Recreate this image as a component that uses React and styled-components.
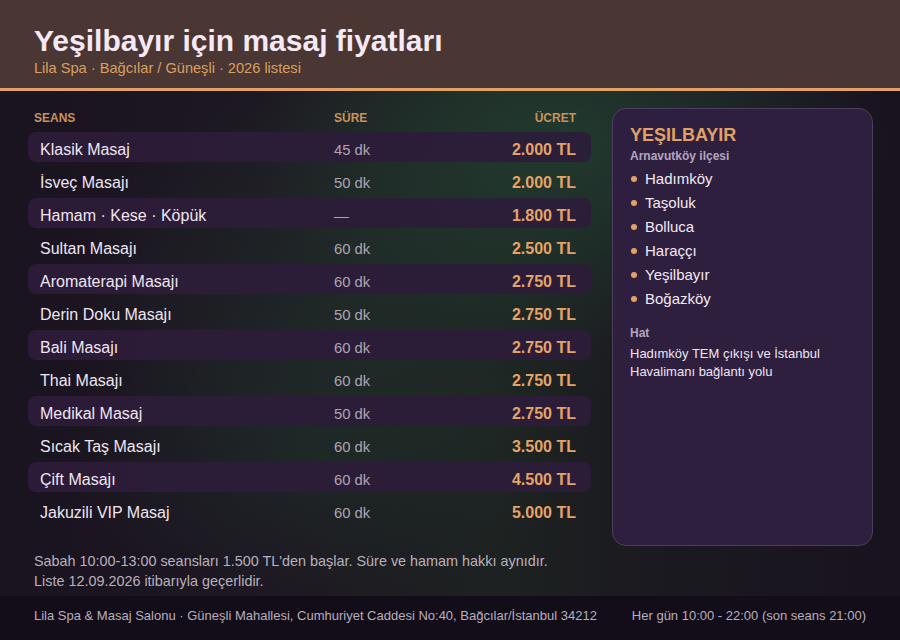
import styled, { createGlobalStyle } from 'styled-components';

const sessions = [
  { name: 'Klasik Masaj', time: '45 dk', price: '2.000 TL' },
  { name: 'İsveç Masajı', time: '50 dk', price: '2.000 TL' },
  { name: 'Hamam · Kese · Köpük', time: '—', price: '1.800 TL' },
  { name: 'Sultan Masajı', time: '60 dk', price: '2.500 TL' },
  { name: 'Aromaterapi Masajı', time: '60 dk', price: '2.750 TL' },
  { name: 'Derin Doku Masajı', time: '50 dk', price: '2.750 TL' },
  { name: 'Bali Masajı', time: '60 dk', price: '2.750 TL' },
  { name: 'Thai Masajı', time: '60 dk', price: '2.750 TL' },
  { name: 'Medikal Masaj', time: '50 dk', price: '2.750 TL' },
  { name: 'Sıcak Taş Masajı', time: '60 dk', price: '3.500 TL' },
  { name: 'Çift Masajı', time: '60 dk', price: '4.500 TL' },
  { name: 'Jakuzili VIP Masaj', time: '60 dk', price: '5.000 TL' },
];

const areas = ['Hadımköy', 'Taşoluk', 'Bolluca', 'Haraççı', 'Yeşilbayır', 'Boğazköy'];

export default function App() {
  return (
    <>
      <GlobalStyle />
      <Page>
        <Header>
          <Title>Yeşilbayır için masaj fiyatları</Title>
          <Subtitle>Lila Spa · Bağcılar / Güneşli · 2026 listesi</Subtitle>
        </Header>

        <Main>
          <Columns>
            <Table>
              <HeadRow>
                <span>Seans</span>
                <span>Süre</span>
                <HeadRight>Ücret</HeadRight>
              </HeadRow>
              {sessions.map((s, i) => (
                <Row key={s.name} $striped={i % 2 === 0}>
                  <Name>{s.name}</Name>
                  <Time>{s.time}</Time>
                  <Price>{s.price}</Price>
                </Row>
              ))}
            </Table>

            <Card>
              <CardTitle>YEŞILBAYIR</CardTitle>
              <Label>Arnavutköy ilçesi</Label>
              <List>
                {areas.map((a) => (
                  <Item key={a}>{a}</Item>
                ))}
              </List>
              <Label $top>Hat</Label>
              <Note>
                Hadımköy TEM çıkışı ve İstanbul
                <br />
                Havalimanı bağlantı yolu
              </Note>
            </Card>
          </Columns>

          <Footnote>
            Sabah 10:00-13:00 seansları 1.500 TL'den başlar. Süre ve hamam hakkı aynıdır.
            <br />
            Liste 12.09.2026 itibarıyla geçerlidir.
          </Footnote>
        </Main>

        <Footer>
          <span>Lila Spa &amp; Masaj Salonu · Güneşli Mahallesi, Cumhuriyet Caddesi No:40, Bağcılar/İstanbul 34212</span>
          <span>Her gün 10:00 - 22:00 (son seans 21:00)</span>
        </Footer>
      </Page>
    </>
  );
}

const GlobalStyle = createGlobalStyle`
  html, body {
    margin: 0;
    padding: 0;
  }
  body {
    font-family: "Liberation Sans", Arial, sans-serif;
    background: #17111d;
  }
`;

const Page = styled.div`
  width: 900px;
  height: 640px;
  display: flex;
  flex-direction: column;
  overflow: hidden;
  background:
    radial-gradient(ellipse 320px 210px at 570px 140px, rgba(36, 72, 54, 0.65), transparent 100%),
    radial-gradient(ellipse 280px 220px at 360px 290px, rgba(34, 60, 46, 0.45), transparent 100%),
    radial-gradient(ellipse 260px 150px at 320px 450px, rgba(30, 56, 44, 0.42), transparent 100%),
    linear-gradient(90deg, #1a1320 0%, #1d1822 30%, #1d2221 55%, #1b1a20 72%, #19121f 100%);
`;

const Header = styled.header`
  background: #4a3632;
  border-bottom: 3px solid #e3a263;
  padding: 24px 34px 10px;
`;

const Title = styled.h1`
  margin: 0;
  font-size: 30px;
  line-height: 34px;
  font-weight: 700;
  color: #f6e9f6;
`;

const Subtitle = styled.div`
  font-size: 14.6px;
  line-height: 20px;
  color: #d9a062;
`;

const Main = styled.main`
  flex: 1;
  padding: 17px 27px 0 28px;
  display: flex;
  flex-direction: column;
`;

const Columns = styled.div`
  display: grid;
  grid-template-columns: 1fr 261px;
  column-gap: 21px;
`;

const Table = styled.div`
  display: flex;
  flex-direction: column;
  gap: 3px;
  padding-bottom: 21px;
`;

const HeadRow = styled.div`
  display: grid;
  grid-template-columns: 300px 1fr auto;
  align-items: end;
  height: 17px;
  padding: 0 15px 4px 6px;
  font-size: 12px;
  line-height: 14px;
  font-weight: 700;
  text-transform: uppercase;
  color: #c8925a;
`;

const HeadRight = styled.span`
  text-align: right;
`;

const Row = styled.div`
  display: grid;
  grid-template-columns: 294px 1fr auto;
  align-items: center;
  height: 30px;
  padding: 5px 15px 0 12px;
  box-sizing: border-box;
  border-radius: 8px;
  background: ${(p) => (p.$striped ? 'rgba(44, 28, 58, 0.92)' : 'transparent')};
`;

const Name = styled.span`
  font-size: 16px;
  color: #efe5f1;
`;

const Time = styled.span`
  font-size: 14.8px;
  color: #aea4b4;
`;

const Price = styled.span`
  font-size: 16px;
  font-weight: 700;
  color: #e6a367;
  text-align: right;
`;

const Card = styled.aside`
  background: #2e1f3e;
  border: 1px solid #4d3d60;
  border-radius: 14px;
  padding: 15px 17px;
`;

const CardTitle = styled.div`
  font-size: 18px;
  line-height: 22px;
  font-weight: 700;
  color: #e1a064;
`;

const Label = styled.div`
  font-size: 12px;
  line-height: 16px;
  font-weight: 700;
  color: #b3a5bf;
  margin-top: ${(p) => (p.$top ? '14px' : '2px')};
`;

const List = styled.ul`
  list-style: none;
  margin: 3px 0 0;
  padding: 0;
`;

const Item = styled.li`
  display: flex;
  align-items: center;
  gap: 8px;
  font-size: 15px;
  line-height: 24px;
  color: #f2e8f4;

  &::before {
    content: '';
    width: 6px;
    height: 6px;
    margin-left: 1px;
    border-radius: 50%;
    background: #e3a263;
  }
`;

const Note = styled.p`
  margin: 4px 0 0;
  font-size: 13px;
  line-height: 18px;
  color: #eee4f1;
`;

const Footnote = styled.p`
  margin: 5px 0 0 6px;
  font-size: 14.4px;
  line-height: 20px;
  color: #b9b0be;
`;

const Footer = styled.footer`
  height: 44px;
  flex-shrink: 0;
  box-sizing: border-box;
  display: flex;
  align-items: center;
  justify-content: space-between;
  padding: 0 34px 6px;
  background: #130d19;
  font-size: 13px;
  color: #b8afbe;
`;
